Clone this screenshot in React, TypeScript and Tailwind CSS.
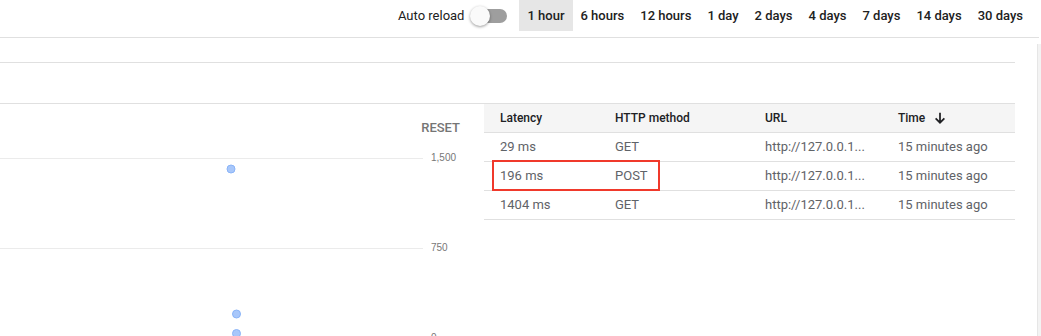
import React from "react";

const ranges = ["1 hour", "6 hours", "12 hours", "1 day", "2 days", "4 days", "7 days", "14 days", "30 days"];

const rows = [
  { latency: "29 ms", method: "GET", url: "http://127.0.0.1...", time: "15 minutes ago" },
  { latency: "196 ms", method: "POST", url: "http://127.0.0.1...", time: "15 minutes ago" },
  { latency: "1404 ms", method: "GET", url: "http://127.0.0.1...", time: "15 minutes ago" },
];

const cols = "grid grid-cols-[116px_149px_133px_133px]";

export default function App() {
  return (
    <div
      className="w-[1041px] h-[336px] overflow-hidden bg-white flex flex-col"
      style={{ fontFamily: "Roboto, 'Liberation Sans', Arial, sans-serif" }}
    >
      {/* Top bar */}
      <div className="h-[38px] shrink-0 border-b border-[#e0e0e0] flex justify-end items-start pr-[8px] mr-[2px]">
        <div className="h-[31px] flex items-center text-[13px] text-[#212121]">Auto reload</div>
        <div className="h-[31px] flex items-center ml-[6px] mr-[12px]">
          <div className="relative w-[37px] h-[20px] flex items-center">
            <div className="ml-[3px] w-[34px] h-[14px] rounded-full bg-[#9e9e9e]" />
            <div className="absolute left-0 top-0 w-[20px] h-[20px] rounded-full bg-[#fafafa] shadow-[0_1px_3px_rgba(0,0,0,0.4)]" />
          </div>
        </div>
        {ranges.map((r, i) => (
          <div
            key={r}
            className={
              "h-[31px] px-[8px] flex items-center text-[13px] font-medium text-[#212121] " +
              (i === 0 ? "bg-[#e6e6e6]" : "")
            }
          >
            {r}
          </div>
        ))}
      </div>

      <div className="flex flex-1 min-h-0">
        <div className="w-[1015px] flex flex-col">
          <div className="h-[25px] shrink-0 border-b border-[#e0e0e0]" />
          <div className="h-[41px] shrink-0 border-b border-[#e0e0e0]" />
          <div className="flex">
            {/* Chart */}
            <div className="w-[484px] flex flex-col">
              <div className="pt-[16px] pr-[24px] h-[32px] text-right text-[13px] leading-[16px] font-medium text-[#757575]">
                RESET
              </div>
              <svg width="484" height="210" className="block shrink-0">
                <line x1="0" y1="22.5" x2="423" y2="22.5" stroke="#ebebeb" strokeWidth="1" />
                <line x1="0" y1="112.5" x2="423" y2="112.5" stroke="#ebebeb" strokeWidth="1" />
                <line x1="0" y1="202.5" x2="423" y2="202.5" stroke="#ebebeb" strokeWidth="1" />
                <text x="431" y="25" fontSize="10" fill="#777" fontFamily="'Liberation Sans', Arial, sans-serif">1,500</text>
                <text x="431" y="115" fontSize="10" fill="#777" fontFamily="'Liberation Sans', Arial, sans-serif">750</text>
                <text x="431" y="205" fontSize="10" fill="#777" fontFamily="'Liberation Sans', Arial, sans-serif">0</text>
                <circle cx="231" cy="33" r="4" fill="#a8c7fa" stroke="#8ab4f8" strokeWidth="1" />
                <circle cx="236.5" cy="178" r="4" fill="#a8c7fa" stroke="#8ab4f8" strokeWidth="1" />
                <circle cx="236.5" cy="197.5" r="4" fill="#a8c7fa" stroke="#8ab4f8" strokeWidth="1" />
              </svg>
            </div>

            {/* Table */}
            <div className="w-[531px] relative">
              <div className={cols + " h-[29px] bg-[#f5f5f5] border-b border-[#e0e0e0] items-center text-[12px] font-medium text-[#202124]"}>
                <div className="pl-[16px]">Latency</div>
                <div className="pl-[15px]">HTTP method</div>
                <div className="pl-[16px]">URL</div>
                <div className="pl-[16px] flex items-center">
                  <span>Time</span>
                  <svg width="14" height="14" viewBox="0 0 24 24" className="ml-[8px]">
                    <path d="M12 3v17M4.5 12.5L12 20l7.5-7.5" fill="none" stroke="#202124" strokeWidth="3" />
                  </svg>
                </div>
              </div>
              {rows.map((r) => (
                <div
                  key={r.latency}
                  className={cols + " h-[29px] border-b border-[#e0e0e0] items-center text-[13px] text-[#5f6368]"}
                >
                  <div className="pl-[16px]">{r.latency}</div>
                  <div className="pl-[15px]">{r.method}</div>
                  <div className="pl-[16px]">{r.url}</div>
                  <div className="pl-[16px]">{r.time}</div>
                </div>
              ))}
              <div className="absolute left-[8px] top-[56px] w-[168px] h-[31px] border-2 border-[#f0392b] pointer-events-none" />
            </div>
          </div>
        </div>
        <div className="ml-auto mt-[6px] w-[4px] bg-[#f3f3f3] border-l border-[#e6e6e6]" />
      </div>
    </div>
  );
}
